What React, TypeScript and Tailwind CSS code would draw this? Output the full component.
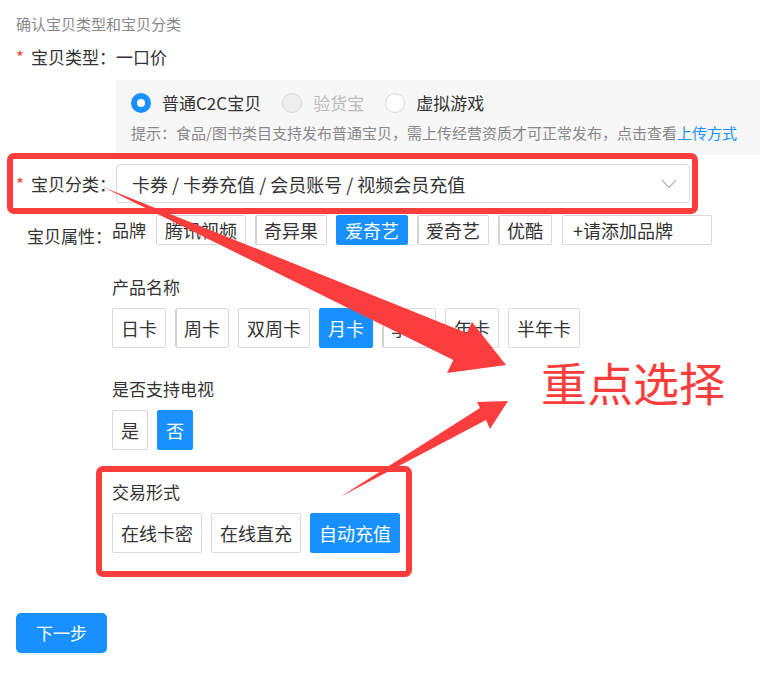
import clsx from "clsx"

const brands = [
  { label: "腾讯视频" },
  { label: "奇异果", thick: true },
  { label: "爱奇艺", active: true },
  { label: "爱奇艺", thick: true },
  { label: "优酷", thick: true },
]

const products = [
  { label: "日卡" },
  { label: "周卡", thick: true },
  { label: "双周卡" },
  { label: "月卡", active: true },
  { label: "季卡", thick: true },
  { label: "年卡" },
  { label: "半年卡" },
]

function Tag({
  label,
  active,
  thick,
  small,
}: {
  label: string
  active?: boolean
  thick?: boolean
  small?: boolean
}) {
  return (
    <div
      className={clsx(
        "flex items-center justify-center whitespace-nowrap rounded-[2px] border px-[8px] text-[18px] leading-none",
        small ? "h-[30px]" : "h-10",
        active
          ? "border-[#1890ff] bg-[#1890ff] text-white"
          : "border-[#d9d9d9] bg-white text-[#333]",
        thick && !active && "border-l-2 border-l-[#d4d4d4] pl-[7px]"
      )}
    >
      {label}
    </div>
  )
}

function Radio({ label, state }: { label: string; state: "on" | "off" | "disabled" }) {
  return (
    <div className="flex items-center gap-[11px]">
      {state === "on" ? (
        <span className="flex h-5 w-5 items-center justify-center rounded-full bg-[#1890ff]">
          <span className="h-[8px] w-[8px] rounded-full bg-white" />
        </span>
      ) : (
        <span
          className={clsx(
            "h-5 w-5 rounded-full border border-[#d9d9d9]",
            state === "disabled" ? "bg-[#eeeeee]" : "bg-white"
          )}
        />
      )}
      <span
        className={clsx(
          "text-[17px] leading-5",
          state === "disabled" ? "text-[#bbb]" : "text-[#333]"
        )}
      >
        {label}
      </span>
    </div>
  )
}

export default function App() {
  return (
    <div className="relative h-[678px] w-[760px] overflow-hidden bg-white pl-4 pt-[14px] font-['Noto_Sans_CJK_SC','Noto_Sans',sans-serif] text-[#333]">
      <div className="text-[15px] leading-5 text-[#888]">确认宝贝类型和宝贝分类</div>

      <div className="mt-[11px] flex h-6 items-center text-[17px] leading-6">
        <span className="w-[15px] text-[#f5453f]">*</span>
        宝贝类型：一口价
      </div>

      <div className="ml-[100px] mt-[11px] bg-[#f7f7f7] pb-[12px] pl-[15px] pt-[13px]">
        <div className="flex items-center gap-[21px]">
          <Radio label="普通C2C宝贝" state="on" />
          <Radio label="验货宝" state="disabled" />
          <Radio label="虚拟游戏" state="off" />
        </div>
        <div className="mt-[10px] whitespace-nowrap text-[15px] leading-5 text-[#888]">
          提示：食品/图书类目支持发布普通宝贝，需上传经营资质才可正常发布，点击查看
          <span className="text-[#1890ff]">上传方式</span>
        </div>
      </div>

      {/* 宝贝分类 (marked) */}
      <div className="-ml-[9px] -mt-[2px] flex h-[61px] w-[691px] items-center rounded-[7px] border-[6px] border-[#fc3d3d] pl-[3px]">
        <span className="w-[15px] text-[17px] text-[#f5453f]">*</span>
        <span className="text-[17px] leading-6">宝贝分类：</span>
        <div className="flex h-[39px] w-[574px] items-center justify-between rounded-[4px] border border-[#d9d9d9] pl-[15px] pr-[12px]">
          <span className="text-[18px] leading-6">卡券 / 卡券充值 / 会员账号 / 视频会员充值</span>
          <svg width="16" height="10" viewBox="0 0 16 10" fill="none">
            <polyline points="1,1 8,8.5 15,1" stroke="#b8b8b8" strokeWidth="1.2" />
          </svg>
        </div>
      </div>

      <div className="mt-[1px] flex">
        <div className="w-[96px] pt-[9px] text-right text-[17px] leading-6">宝贝属性：</div>
        <div className="flex flex-col">
          <div className="flex h-[30px] items-center gap-[9px]">
            <span className="mr-[1px] text-[17px] leading-6">品牌</span>
            {brands.map((b, i) => (
              <Tag key={i} label={b.label} active={b.active} thick={b.thick} small />
            ))}
            <div className="ml-[1px] flex h-[30px] w-[150px] items-center rounded-[2px] border border-[#d9d9d9] pl-[10px] text-[18px] leading-none">
              +请添加品牌
            </div>
          </div>

          <div className="mt-[30px] text-[17px] leading-6">产品名称</div>
          <div className="mt-[9px] flex gap-[9px]">
            {products.map((p) => (
              <Tag key={p.label} label={p.label} active={p.active} thick={p.thick} />
            ))}
          </div>

          <div className="mt-[29px] text-[17px] leading-6">是否支持电视</div>
          <div className="mt-[9px] flex gap-[9px]">
            <Tag label="是" />
            <Tag label="否" active />
          </div>

          {/* 交易形式 (marked) */}
          <div className="-ml-4 mt-[16px] w-[316px] rounded-[7px] border-[6px] border-[#fc3d3d] pb-[18px] pl-[10px] pt-[8px]">
            <div className="text-[17px] leading-6">交易形式</div>
            <div className="mt-[9px] flex gap-[9px]">
              <Tag label="在线卡密" />
              <Tag label="在线直充" />
              <Tag label="自动充值" active />
            </div>
          </div>
        </div>
      </div>

      <button className="mt-[36px] flex h-10 w-[91px] items-center justify-center rounded-[5px] bg-[#1890ff] text-[17px] text-white shadow-[0_2px_0_rgba(24,144,255,0.1)]">
        下一步
      </button>

      {/* annotation arrows */}
      <svg
        className="pointer-events-none absolute left-0 top-0"
        width="760"
        height="678"
        viewBox="0 0 760 678"
      >
        <polygon
          points="103,187 466.7,332.9 472,322 506,365 447,373 453.3,360.1"
          fill="#fc3d3d"
        />
        <polygon
          points="340,497 480,408 477,402 508,401 490,429 486,420"
          fill="#fc3d3d"
        />
      </svg>

      <div className="pointer-events-none absolute left-[541px] top-[358px] text-[46px] leading-none text-[#fc3d3d]">
        重点选择
      </div>
    </div>
  )
}
